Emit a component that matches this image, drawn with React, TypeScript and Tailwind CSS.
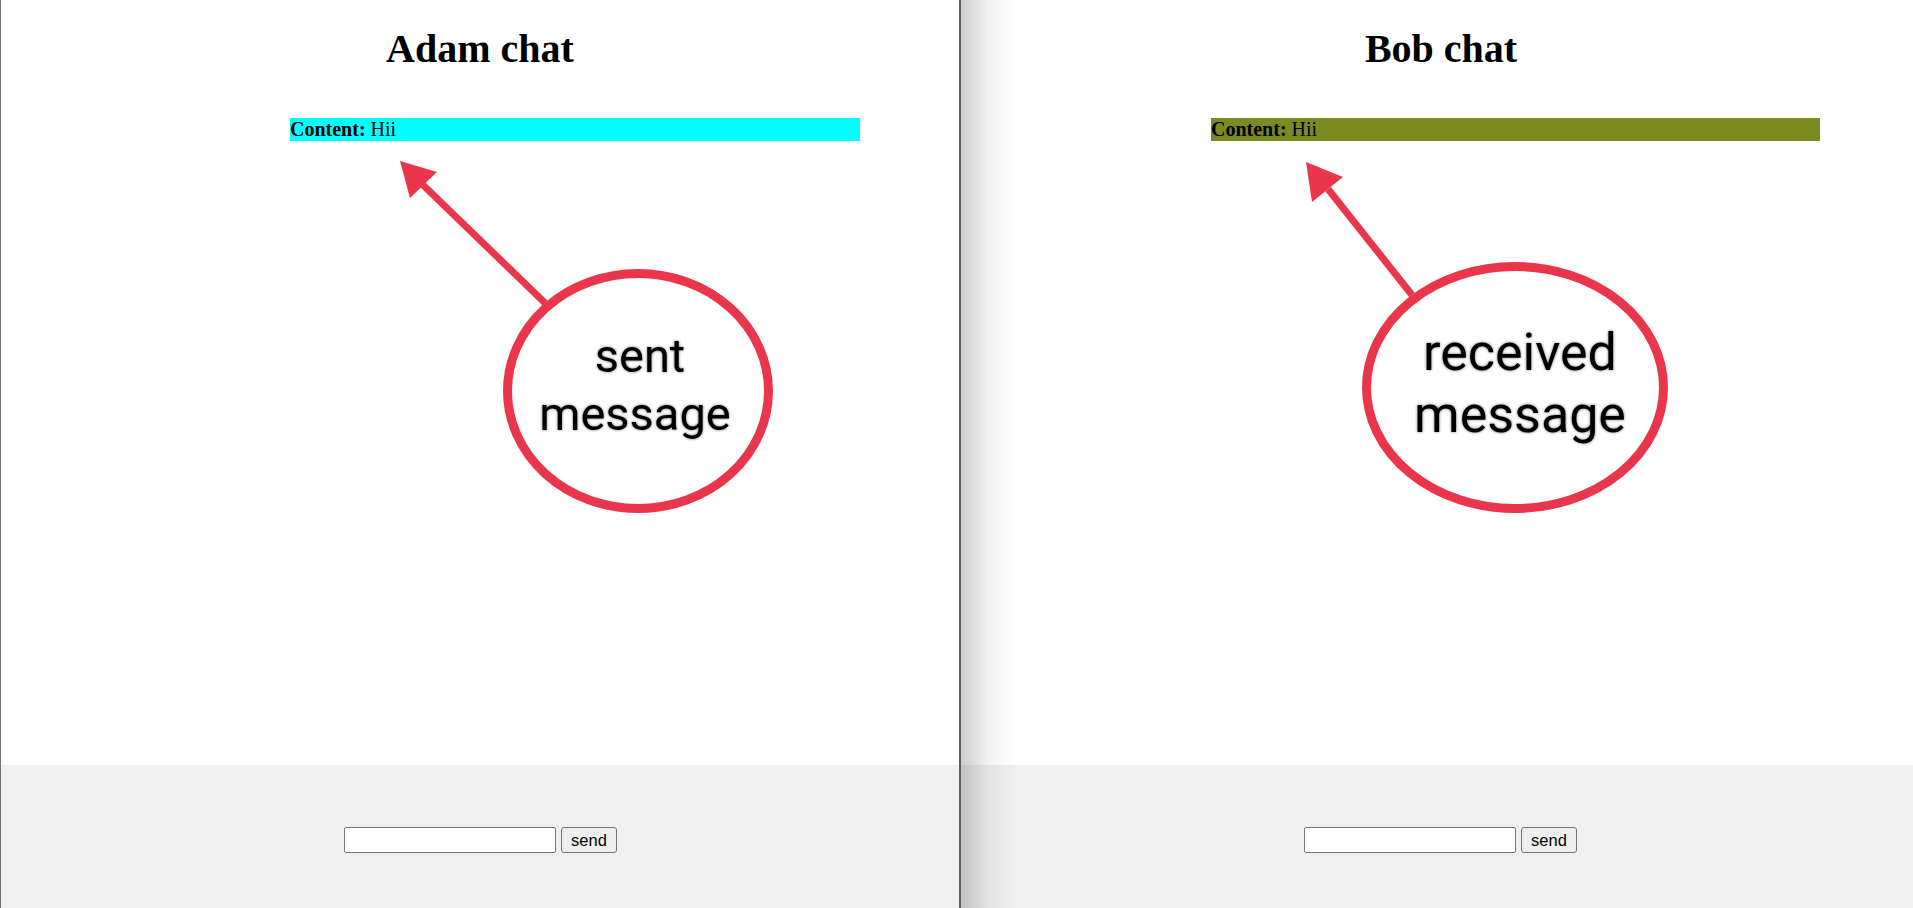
import React from "react";

type ChatPanelProps = {
  title: string;
  barClass: string;
  headClass?: string;
  footerClass: string;
  className?: string;
};

const ChatPanel = ({ title, barClass, headClass, footerClass, className }: ChatPanelProps) => {
  return (
    <div className={`flex flex-col h-full ${className ?? ""}`}>
      <div className="flex-1 bg-white">
        <h1
          className={`mt-[26px] text-center font-['Liberation_Serif',serif] text-[40px] leading-[46px] font-bold text-black ${headClass ?? ""}`}
        >
          {title}
        </h1>
        <div
          className={`mt-[46px] h-[23px] font-['Liberation_Serif',serif] text-[20px] leading-[23px] text-black ${barClass}`}
        >
          <b>Content:</b> Hii
        </div>
      </div>
      <div className={`h-[143px] bg-[#f0f0f0] flex justify-center items-start pt-[62px] ${footerClass}`}>
        <input
          type="text"
          className="w-[212px] h-[26px] bg-white border border-[#767676] rounded-[2px] px-1 font-['Liberation_Sans',sans-serif] text-[16px]"
        />
        <button className="ml-[5px] w-[56px] h-[26px] bg-[#efefef] border border-[#767676] rounded-[3px] font-['Liberation_Sans',sans-serif] text-[16.5px] leading-none text-black">
          send
        </button>
      </div>
    </div>
  );
};

export default function App() {
  return (
    <div className="relative w-[1913px] h-[908px] overflow-hidden bg-white flex">
      <ChatPanel
        title="Adam chat"
        barClass="bg-[#00ffff] ml-[289px] w-[570px]"
        footerClass="pl-[1px]"
        className="w-[961px] border-l border-l-[#707070] border-r-2 border-r-[#5f5f5f]"
      />
      <div className="relative flex-1 h-full">
        <ChatPanel
          title="Bob chat"
          headClass="pl-[8px]"
          barClass="bg-[#7c8a22] ml-[250px] w-[609px]"
          footerClass="pl-[7px]"
        />
        <div className="pointer-events-none absolute left-0 top-0 h-full w-[56px] bg-linear-to-r from-black/20 via-black/5 to-transparent" />
      </div>

      {/* annotations drawn over the screenshot */}
      <svg
        className="pointer-events-none absolute left-0 top-0"
        width={1913}
        height={908}
        viewBox="0 0 1913 908"
      >
        <defs>
          <filter id="glow" x="-10%" y="-30%" width="120%" height="160%">
            <feGaussianBlur in="SourceAlpha" stdDeviation="1.8" result="b" />
            <feComponentTransfer in="b" result="bs">
              <feFuncA type="linear" slope="0.55" />
            </feComponentTransfer>
            <feMerge>
              <feMergeNode in="bs" />
              <feMergeNode in="SourceGraphic" />
            </feMerge>
          </filter>
        </defs>

        {/* sent */}
        <line x1={545} y1={303} x2={423} y2={185} stroke="#e9364b" strokeWidth={7} />
        <polygon points="400,161 437,172 410,198" fill="#e9364b" />
        <ellipse cx={638} cy={391} rx={130.5} ry={117.5} fill="none" stroke="#e9364b" strokeWidth={9} />
        <g filter="url(#glow)" fontFamily="Roboto, sans-serif" fontSize={47} fill="#000" textAnchor="middle">
          <text x={640} y={372}>sent</text>
          <text x={635} y={430}>message</text>
        </g>

        {/* received */}
        <line x1={1412} y1={295} x2={1328} y2={189} stroke="#e9364b" strokeWidth={7} />
        <polygon points="1306,162 1343,177 1312,202" fill="#e9364b" />
        <ellipse cx={1515} cy={387.5} rx={148.5} ry={121} fill="none" stroke="#e9364b" strokeWidth={9} />
        <g filter="url(#glow)" fontFamily="Roboto, sans-serif" fontSize={52} fill="#000" textAnchor="middle">
          <text x={1520} y={370}>received</text>
          <text x={1520} y={432}>message</text>
        </g>
      </svg>
    </div>
  );
}
